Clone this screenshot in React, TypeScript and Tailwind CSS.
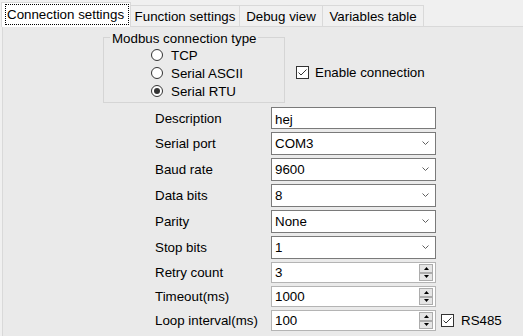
import React from 'react'

const Check = () => (
  <span className="w-[13px] h-[13px] border border-[#333333] bg-white flex items-center justify-center">
    <svg width="11" height="11" viewBox="0 0 11 11">
      <polyline points="1.5,5.5 4,8 9.5,2.5" fill="none" stroke="#333333" strokeWidth="1" />
    </svg>
  </span>
)

const Radio = ({ label, checked }: { label: string; checked?: boolean }) => (
  <div className="flex items-center h-[12px] gap-[8px]">
    <span className="w-[12px] h-[12px] rounded-full border border-[#333333] bg-white flex items-center justify-center">
      {checked && <span className="w-[6px] h-[6px] rounded-full bg-[#333333]" />}
    </span>
    <span>{label}</span>
  </div>
)

const Chevron = () => (
  <svg width="7" height="4" viewBox="0 0 7 4">
    <polyline points="0.5,0.5 3.5,3.5 6.5,0.5" fill="none" stroke="#606060" strokeWidth="1" />
  </svg>
)

const Combo = ({ value }: { value: string }) => (
  <div className="w-[165px] h-[23px] border border-[#7a7a7a] bg-white flex items-center pl-[3px] pr-[6px] pb-[1px]">
    <span className="flex-1">{value}</span>
    <Chevron />
  </div>
)

const SpinButton = ({ up }: { up?: boolean }) => (
  <div className="flex-1 border border-[#acacac] bg-[#e5e5e5] flex items-center justify-center">
    <svg width="5" height="3" viewBox="0 0 5 3">
      {up ? <polygon points="2.5,0 5,3 0,3" fill="#000" /> : <polygon points="0,0 5,0 2.5,3" fill="#000" />}
    </svg>
  </div>
)

const Spin = ({ value }: { value: string }) => (
  <div className="w-[165px] h-[21px] border border-[#b4b4b4] bg-white flex items-center pl-[3px] pr-[2px]">
    <span className="flex-1">{value}</span>
    <div className="w-[14px] h-[17px] flex flex-col">
      <SpinButton up />
      <SpinButton />
    </div>
  </div>
)

const Row = ({ label, children }: { label: string; children: React.ReactNode }) => (
  <div className="flex items-center">
    <span className="w-[116px]">{label}</span>
    {children}
  </div>
)

const App: React.FunctionComponent = () => {
  const tabs = [
    { name: 'Function settings', w: 'w-[109px]' },
    { name: 'Debug view', w: 'w-[83px]' },
    { name: 'Variables table', w: 'w-[101px]' },
  ]

  return (
    <div className="w-[523px] h-[336px] bg-[#f0f0f0] flex flex-col overflow-hidden font-['Liberation_Sans',Arial,sans-serif] text-[13.33px] leading-[15px] text-black">
      {/* tab strip */}
      <div className="flex items-end h-[26px] pl-[1px] relative z-10">
        <div className="w-[130px] h-[25px] -mb-px bg-white border border-b-0 border-[#d9d9d9] pt-[1px] pl-[3px]">
          <span className="w-[124px] h-[21px] border border-dotted border-black flex items-center pl-[1px]">
            Connection settings
          </span>
        </div>
        {tabs.map((t) => (
          <div
            key={t.name}
            className={`${t.w} h-[21px] border-t border-r border-[#d9d9d9] flex items-center justify-center`}
          >
            {t.name}
          </div>
        ))}
      </div>

      {/* tab page */}
      <div className="flex-1 ml-[2px] bg-[#eaeaea] border-t border-l border-[#d9d9d9]">
        <div className="flex items-start pl-[100px] pt-[10px]">
          <div className="relative w-[182px] h-[66px] border border-[#d5d5d5]">
            <span className="absolute left-[6px] top-[-7px] px-[2px] bg-[#eaeaea]">Modbus connection type</span>
            <div className="flex flex-col gap-[6px] pl-[47px] pt-[11px]">
              <Radio label="TCP" />
              <Radio label="Serial ASCII" />
              <Radio label="Serial RTU" checked />
            </div>
          </div>
          <div className="flex items-center gap-[6px] ml-[11px] mt-[28px]">
            <Check />
            <span>Enable connection</span>
          </div>
        </div>

        <div className="flex flex-col gap-[3px] pl-[152px] mt-[4px]">
          <Row label="Description">
            <div className="w-[165px] h-[22px] border border-[#7a7a7a] bg-white flex items-center pl-[3px] pt-[2px]">
              hej
            </div>
          </Row>
          <Row label="Serial port">
            <Combo value="COM3" />
          </Row>
          <Row label="Baud rate">
            <Combo value="9600" />
          </Row>
          <Row label="Data bits">
            <Combo value="8" />
          </Row>
          <Row label="Parity">
            <Combo value="None" />
          </Row>
          <Row label="Stop bits">
            <Combo value="1" />
          </Row>
          <Row label="Retry count">
            <Spin value="3" />
          </Row>
          <Row label="Timeout(ms)">
            <Spin value="1000" />
          </Row>
          <Row label="Loop interval(ms)">
            <Spin value="100" />
            <div className="flex items-center gap-[7px] ml-[5px]">
              <Check />
              <span>RS485</span>
            </div>
          </Row>
        </div>
      </div>
    </div>
  )
}

export default App
